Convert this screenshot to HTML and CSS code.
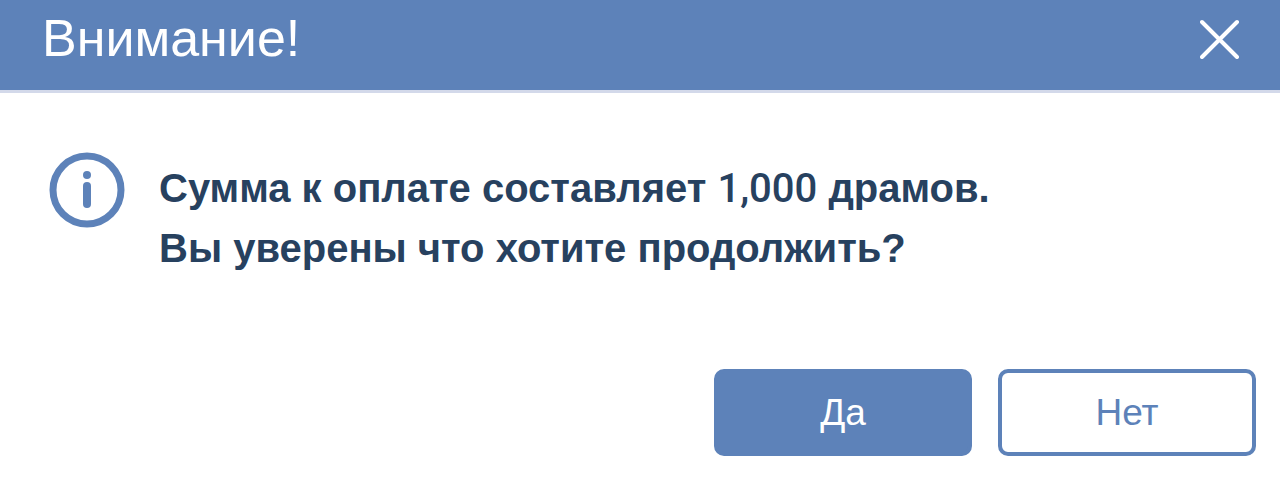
FILE: index.html
```html
<!DOCTYPE html>
<html lang="ru">
  <head>
    <meta charset="UTF-8" />
    <meta name="viewport" content="width=device-width, initial-scale=1.0" />
    <title>Внимание!</title>
    <link rel="stylesheet" href="styles.css">
  </head>
  <body>
    <div class="modal" role="dialog" aria-labelledby="modal-title">
      <header class="modal-header">
        <h1 id="modal-title">Внимание!</h1>
        <button type="button" class="close" aria-label="Закрыть">
          <svg width="40" height="40" viewBox="0 0 40 40">
            <path d="M2 3L37 38M37 3L2 38" />
          </svg>
        </button>
      </header>
      <div class="modal-body">
        <svg class="info-icon" width="76" height="76" viewBox="0 0 76 76">
          <circle class="ring" cx="38" cy="38" r="34" />
          <circle class="dot" cx="38" cy="23" r="4" />
          <path class="stem" d="M38 34V52" />
        </svg>
        <p>Сумма к оплате составляет <span class="amount">1,000</span> драмов.<br>Вы уверены что хотите продолжить?</p>
      </div>
      <div class="modal-footer">
        <button type="button" class="btn btn-primary">Да</button>
        <button type="button" class="btn">Нет</button>
      </div>
    </div>
  </body>
</html>
```

FILE: styles.css
```css
body {
  margin: 0;
  background-color: #fff;
  font-family: "Liberation Sans", Arial, sans-serif;
}
.modal-header {
  display: flex;
  justify-content: space-between;
  align-items: flex-start;
  padding: 9px 40px 23px 42px;
  background-color: #5d82b9;
  border-bottom: 3px solid #d3d9ea;
  color: #fff;
}
h1 {
  margin: 0;
  font-size: 52px;
  font-weight: normal;
  line-height: 58px;
}
.close {
  margin-top: 10px;
  padding: 0;
  border: none;
  background: none;
  cursor: pointer;
}
.close svg {
  display: block;
  stroke: #fff;
  stroke-width: 4;
  stroke-linecap: round;
}
.modal-body {
  display: flex;
  gap: 34px;
  padding: 59px 49px 0;
}
.info-icon {
  flex-shrink: 0;
  fill: none;
  stroke: #5d82b9;
}
.ring {
  stroke-width: 7;
}
.dot {
  fill: #5d82b9;
  stroke: none;
}
.stem {
  stroke-width: 8;
  stroke-linecap: round;
}
p {
  margin: 6px 0 0;
  color: #27415f;
  font-size: 40px;
  font-weight: bold;
  line-height: 60px;
}
.amount {
  font-family: Roboto, sans-serif;
  font-weight: 500;
  line-height: 1;
}
.modal-footer {
  display: flex;
  justify-content: flex-end;
  gap: 26px;
  padding: 91px 24px 43px;
}
.btn {
  width: 258px;
  height: 87px;
  border: 4px solid #5d82b9;
  border-radius: 10px;
  background-color: #fff;
  color: #5d82b9;
  font-family: inherit;
  font-size: 37px;
  cursor: pointer;
}
.btn-primary {
  background-color: #5d82b9;
  color: #fff;
}
```
